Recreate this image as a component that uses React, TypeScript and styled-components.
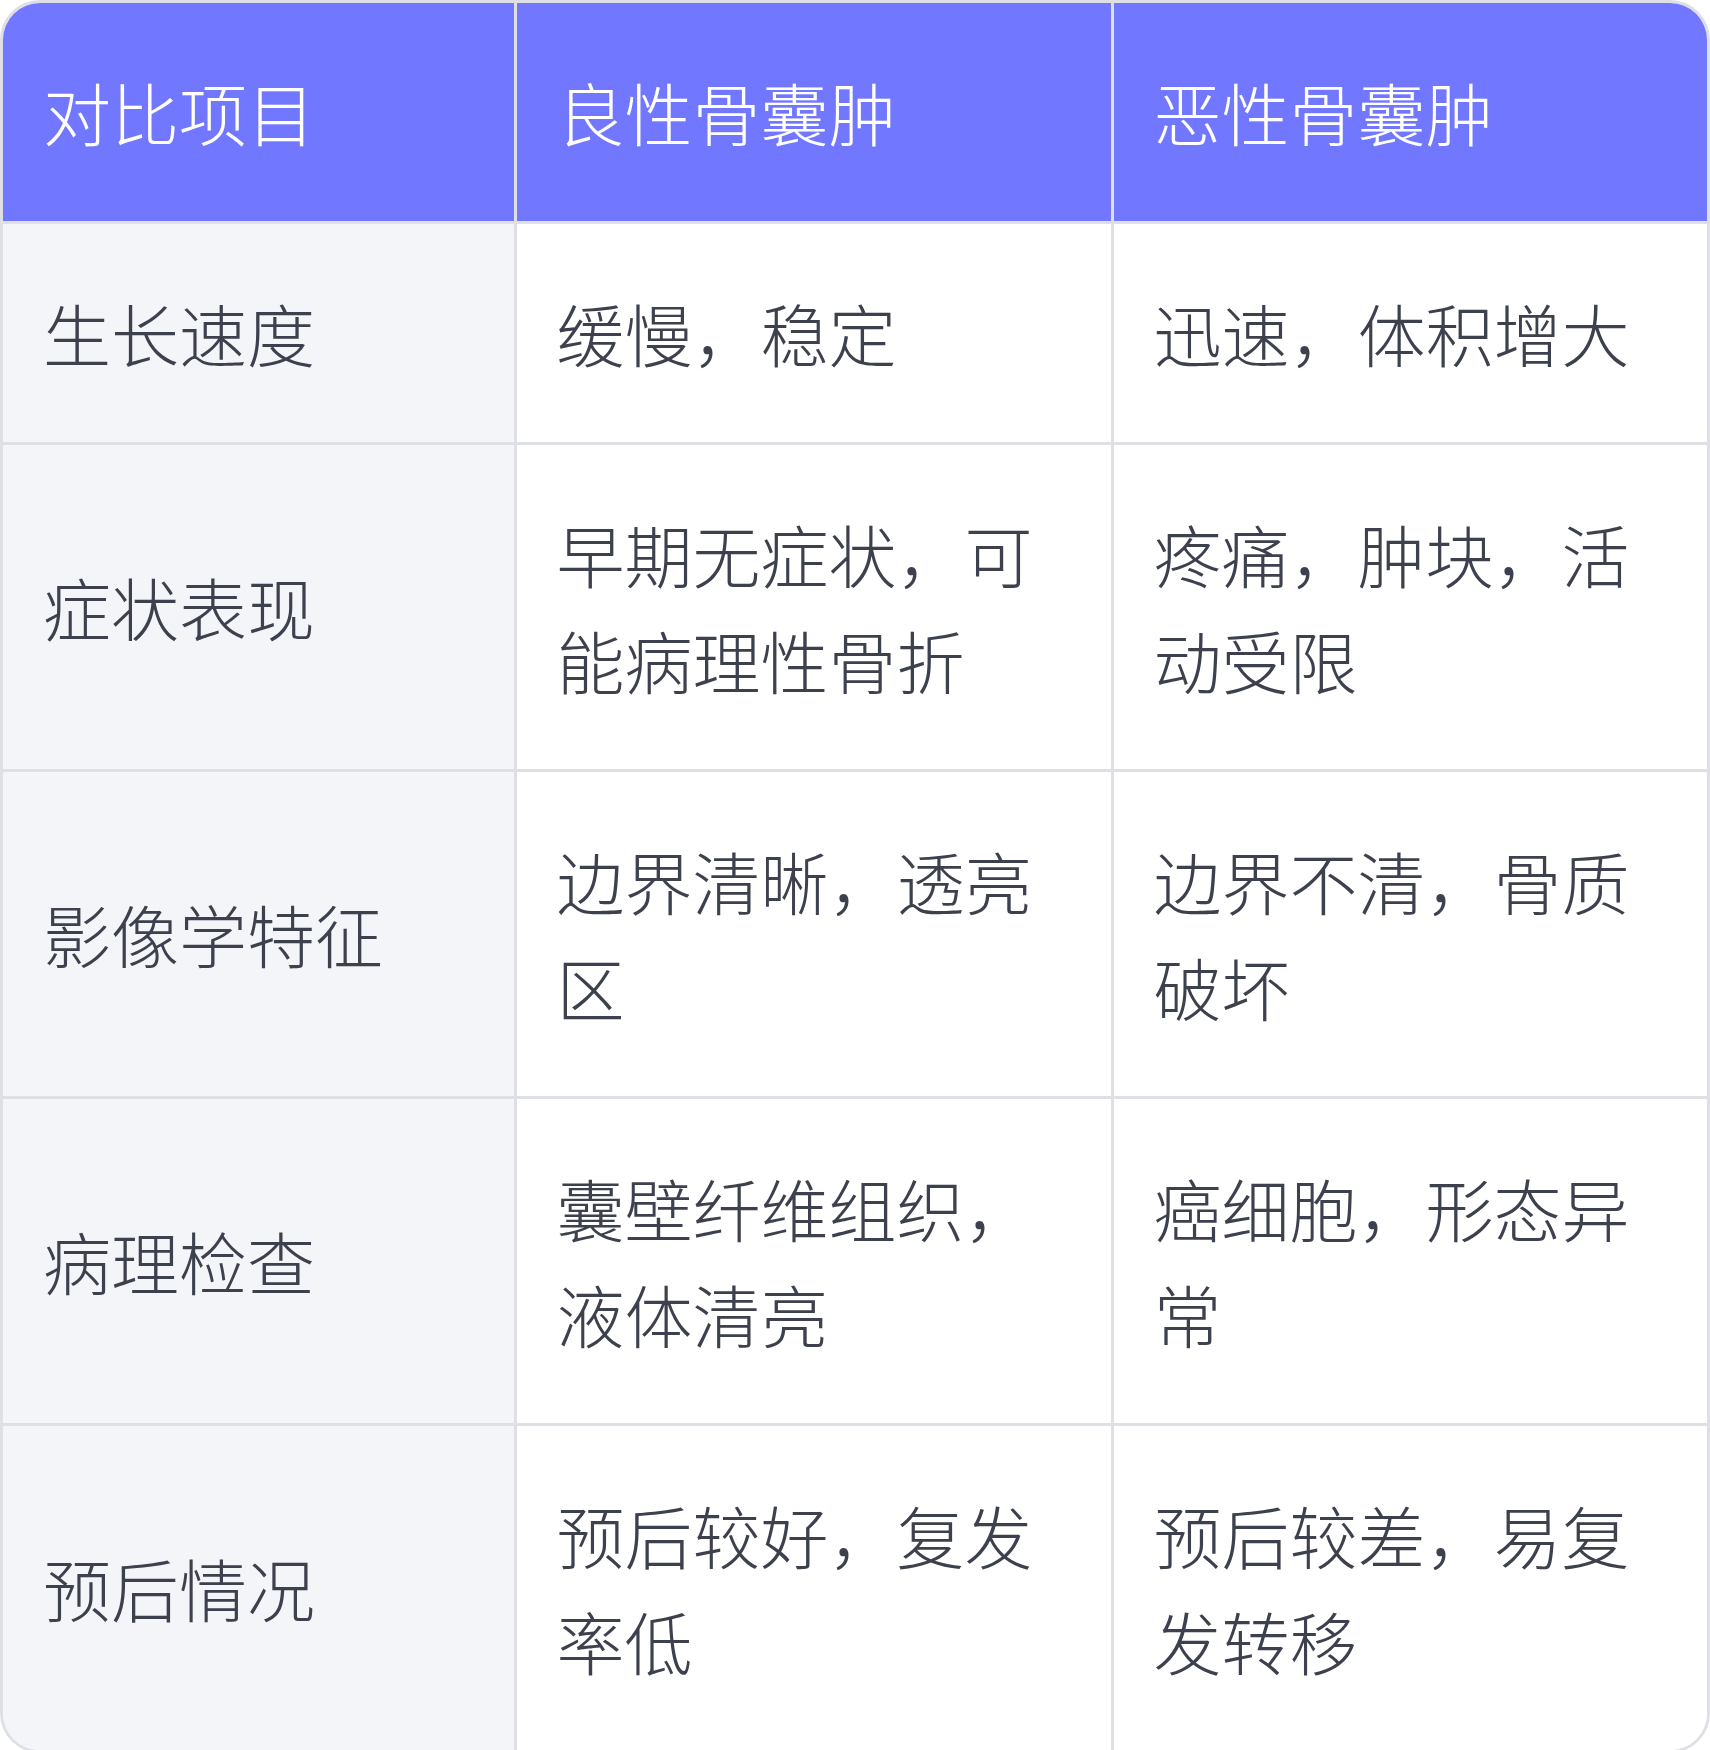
import React from 'react'
import styled, { createGlobalStyle } from 'styled-components'

const GlobalStyle = createGlobalStyle`
  html, body {
    margin: 0;
    padding: 0;
    background: #ffffff;
  }
  body {
    font-family: "Noto Sans CJK SC", "Noto Sans", sans-serif;
  }
`

const rows: [string, string, string][] = [
  ['生长速度', '缓慢，稳定', '迅速，体积增大'],
  ['症状表现', '早期无症状，可能病理性骨折', '疼痛，肿块，活动受限'],
  ['影像学特征', '边界清晰，透亮区', '边界不清，骨质破坏'],
  ['病理检查', '囊壁纤维组织，液体清亮', '癌细胞，形态异常'],
  ['预后情况', '预后较好，复发率低', '预后较差，易复发转移'],
]

export default function App() {
  return (
    <>
      <GlobalStyle />
      <Wrapper>
        <Table>
          <colgroup>
            <col style={{ width: 512 }} />
            <col style={{ width: 597 }} />
            <col />
          </colgroup>
          <thead>
            <tr>
              <HeadCell>对比项目</HeadCell>
              <HeadCell>良性骨囊肿</HeadCell>
              <HeadCell>恶性骨囊肿</HeadCell>
            </tr>
          </thead>
          <tbody>
            {rows.map((r) => (
              <tr key={r[0]}>
                <Cell $label>{r[0]}</Cell>
                <Cell>{r[1]}</Cell>
                <Cell>{r[2]}</Cell>
              </tr>
            ))}
          </tbody>
        </Table>
      </Wrapper>
    </>
  )
}

const Wrapper = styled.div`
  width: 1710px;
  box-sizing: border-box;
  border: 3px solid #dfe0e5;
  border-radius: 40px;
  overflow: hidden;
  background: #ffffff;
`

const Table = styled.table`
  width: 100%;
  table-layout: fixed;
  border-collapse: collapse;
  border-style: hidden;
`

const HeadCell = styled.th`
  background: #7177ff;
  color: #ffffff;
  font-weight: 300;
  font-size: 68px;
  line-height: 106px;
  text-align: left;
  padding: 56px 40px;
  border: 3px solid #dfe0e5;
`

const Cell = styled.td<{ $label?: boolean }>`
  background: ${(p) => (p.$label ? '#f4f5f9' : '#ffffff')};
  color: #3d414d;
  font-weight: 300;
  font-size: 68px;
  line-height: 106px;
  text-align: left;
  vertical-align: middle;
  padding: 56px 40px;
  border: 3px solid #dfe0e5;
`
